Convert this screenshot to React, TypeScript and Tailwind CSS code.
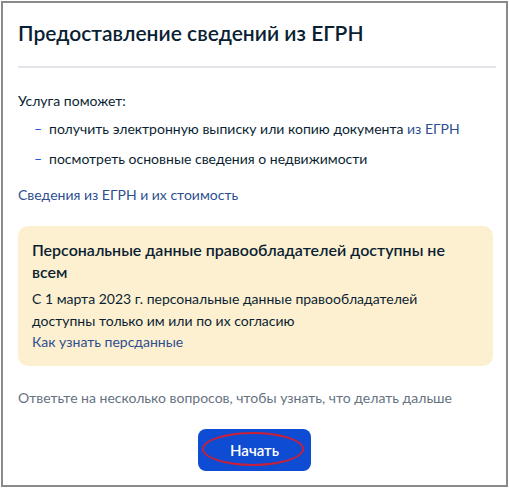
import React from 'react';

const font = { fontFamily: 'Lato, "Noto Sans", sans-serif' };

const Bullet = ({ children }: { children: React.ReactNode }) => (
  <li className="flex items-start">
    <span className="w-[31px] pl-[16px] text-[#0d4cd3]">–</span>
    <span>{children}</span>
  </li>
);

export default function App() {
  return (
    <div className="w-[509px] h-[488px] bg-white p-px" style={font}>
      <div className="h-full border-2 border-[#8a8a8a] pl-[15px] pr-[10px] text-[#0b1f33]">
        <h1 className="pt-[16px] text-[21px] leading-[28px] font-semibold text-[#0b1f33]">
          Предоставление сведений из ЕГРН
        </h1>
        <div className="mt-[19px] h-[2px] bg-[#e1e4e8]" />

        <p className="mt-[23px] text-[14px] leading-[20px]">Услуга поможет:</p>
        <ul className="mt-[8px] text-[14px] leading-[20px] flex flex-col gap-[10px]">
          <Bullet>
            получить электронную выписку или копию документа{' '}
            <span className="text-[#2d4f8f]">из ЕГРН</span>
          </Bullet>
          <Bullet>посмотреть основные сведения о недвижимости</Bullet>
        </ul>

        <p className="mt-[16px] text-[14px] leading-[20px] text-[#2d4f8f]">
          Сведения из ЕГРН и их стоимость
        </p>

        <div className="mt-[21px] mr-[3px] rounded-[10px] bg-[#fdf0d0] px-[14px] pt-[13px] pb-[14px]">
          <h2 className="text-[16px] leading-[22px] font-semibold">
            Персональные данные правообладателей доступны не всем
          </h2>
          <p className="mt-[5px] text-[14px] leading-[22px]">
            С 1 марта 2023 г. персональные данные правообладателей доступны только им или по их согласию
          </p>
          <p className="text-[14px] leading-[20px] text-[#2d4f8f]">Как узнать персданные</p>
        </div>

        <p className="mt-[22px] text-[14px] leading-[20px] text-[#66727f]">
          Ответьте на несколько вопросов, чтобы узнать, что делать дальше
        </p>

        <div className="mt-[21px] flex justify-center pr-[5px]">
          <button className="relative w-[113px] h-[42px] rounded-[8px] bg-[#0d4cd3] text-white text-[15px] font-semibold">
            Начать
            <span className="absolute left-[4px] top-[3px] w-[102px] h-[34px] rounded-[50%] border-[2px] border-[#c8203a]" />
          </button>
        </div>
      </div>
    </div>
  );
}
